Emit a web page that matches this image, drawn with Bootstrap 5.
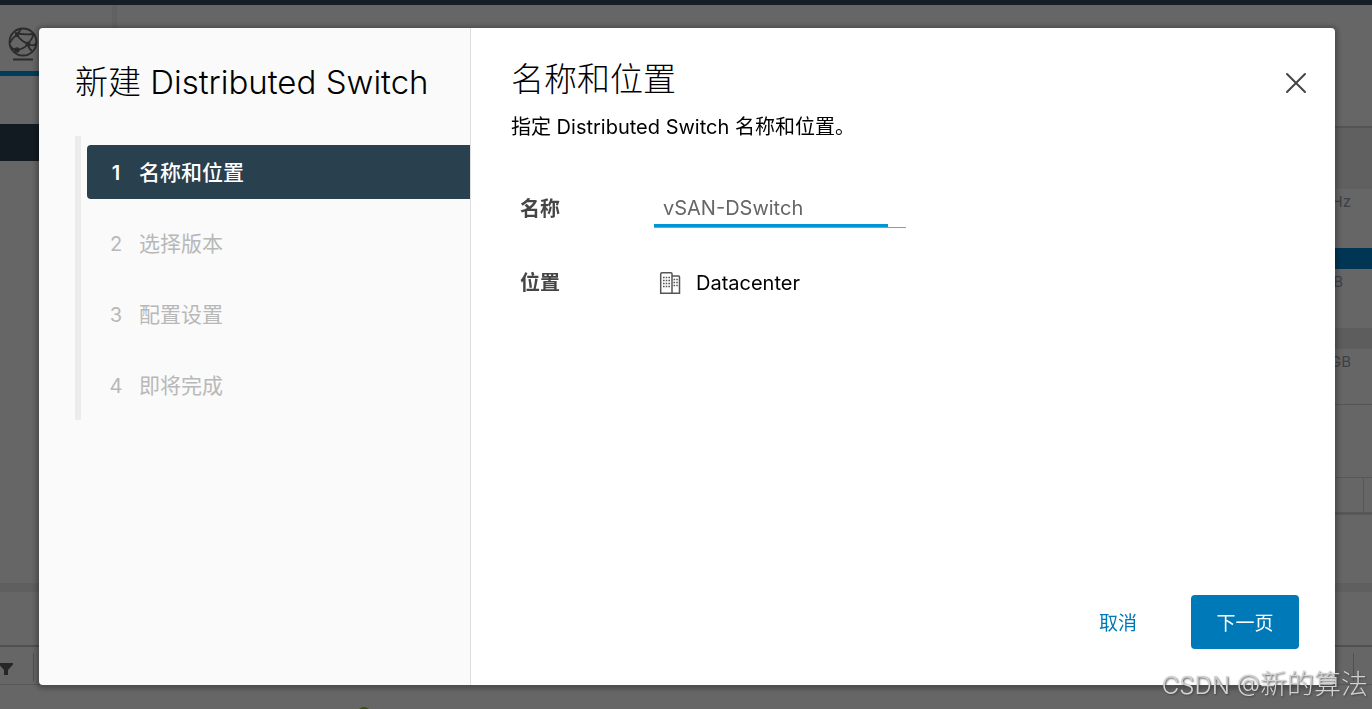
<!DOCTYPE html>
<html lang="zh-CN">
<head>
<meta charset="utf-8">
<meta name="viewport" content="width=device-width, initial-scale=1">
<title>新建 Distributed Switch</title>
<link href="https://cdn.jsdelivr.net/npm/bootstrap@5.3.0/dist/css/bootstrap.min.css" rel="stylesheet">
<style>
  body { font-family: Inter, "Noto Sans CJK SC", sans-serif; background: #666; color: #000; overflow: hidden; }
  h1, h2 { font-size: 33px; line-height: 40px; font-weight: 300; }

  /* dimmed application behind the wizard */
  .app-top { height: 5px; background: #161e26; }
  .app-side { width: 117px; }
  .side-tabs { height: 71px; border-bottom: 5px solid #003d5c; border-right: 5px solid #616161; padding: 22px 0 0 8px; }
  .side-gap { height: 48px; }
  .side-current { height: 37px; background: #131b22; }
  .app-main { width: 100px; font-size: 15px; line-height: 20px; color: #3c4146; text-align: right; }
  .main-head { height: 123px; border-bottom: 2px solid #545454; }
  .main-band { height: 61px; background: #606060; }
  .stat { height: 59px; padding: 3px 21px 0 0; }
  .stat-short { padding-right: 29px; }
  .stat-blue { height: 21px; background: #003554; }
  .stat-band { height: 21px; background: #5d5d5d; }
  .stat-last { height: 56px; border-bottom: 1px solid #545454; }
  .cell-gap { height: 73px; border-bottom: 1px solid #585858; }
  .cell-row { height: 37px; border-bottom: 3px solid #575757; padding-right: 8px; }
  .cell-row > div { height: 100%; border-right: 1px solid #575757; }
  .cell-end { height: 68px; }
  .splitter { height: 9px; background: #5f5f5f; }
  .tasks-head { height: 55px; border-bottom: 2px solid #505050; }
  .tasks-cols { height: 38px; padding: 2px 18px 0 0; border-bottom: 1px solid #575757; color: #262626; }
  .tasks-cols svg { margin: 4px 20px 0 0; }
  .tasks-cols .rule { width: 1px; height: 28px; background: #505050; }
  .status-dot { width: 14px; height: 14px; background: #3b4c14; left: 357px; top: 707px; }

  /* wizard */
  .wizard-wrap { padding: 28px 37px 24px 39px; }
  .wizard { border: 0; border-radius: 4px; box-shadow: 0 1px 4px 3px rgba(0,0,0,.25); overflow: hidden; }
  .wizard-nav { background: #fafafa; border-right: 1px solid #ddd; padding: 34px 0 0 36px; }
  .steps { margin-top: 34px; border-left: 6px solid #ececec; padding: 9px 0 8px 6px; gap: 17px; }
  .step { height: 54px; padding: 1px 0 0 22px; gap: 16px; font-size: 21px; color: #b8b8b8; background: none; border: 0; border-radius: 4px 0 0 4px; text-align: left; }
  .step b { width: 14px; font-size: 20px; font-weight: 400; text-align: center; }
  .step.active { background: #29404e; color: #fff; }
  .step.active span { font-weight: 500; }
  .step.active b { font-weight: 600; }
  .wizard-page { padding: 31px 36px 36px 40px; }
  .lead-line { font-size: 20px; line-height: 28px; margin-top: 14px; }
  .close-x { width: 24px; height: 24px; margin: 12px -9px 0 0; color: #444; }
  .form-rows { margin: 48px 0 0 9px; gap: 41px; font-size: 20px; line-height: 28px; }
  .form-rows label, .row-name { width: 134px; font-weight: 700; color: #454545; }
  .name-box { width: 252px; height: 39px; border: 0; border-bottom: 1px solid #999; border-radius: 0; padding: 0 9px; font-size: 20px; color: #666; outline: 0;
    background: linear-gradient(#0095d3, #0095d3) 0 100% / 234px 3px no-repeat; }
  .place { gap: 14px; padding-left: 4px; }
  .wizard-foot { gap: 30px; }
  .wizard-foot .btn { height: 54px; padding: 10px 0 6px; font-size: 19px; line-height: 28px; border-radius: 4px; --bs-btn-color: #0079b8; }
  .wizard-foot .go { --bs-btn-color: #fff; --bs-btn-bg: #0079b8; width: 108px; }
  .wizard-foot .no { width: 86px; }
  .watermark { right: 4px; bottom: 4px; font-size: 27px; line-height: 38px; color: #d2d2d2; text-shadow: 1px 1px 2px #444; font-weight: 300; z-index: 5; }
  .watermark span { font-size: 24px; }
</style>
</head>
<body class="min-vh-100 position-relative">
<div aria-hidden="true">
  <div class="app-top"></div>
  <div class="d-flex justify-content-between">
    <div class="app-side">
      <div class="side-tabs">
        <svg width="30" height="36" viewBox="0 0 30 36" fill="none" stroke="#2b2b2b" stroke-width="1.8"><circle cx="15" cy="15" r="13.5"/><path d="M7 6Q16 8 25 7M2 16Q4 11 9 8L13 2M9 8Q13 14 20 17T28 16M26 7Q24 12 20 17Q16 22 9 23M9 23Q3 22 2 18M20 17Q21 22 24 24M5 32.500H25"/><circle cx="20" cy="17" r="1.600" fill="#2b2b2b"/><circle cx="9" cy="23" r="1.800" fill="#2b2b2b"/><circle cx="9" cy="8" r="1" fill="#2b2b2b"/></svg>
      </div>
      <div class="side-gap"></div>
      <div class="side-current"></div>
    </div>
    <div class="app-main">
      <div class="main-head"></div>
      <div class="main-band"></div>
      <div class="stat">GHz</div>
      <div class="stat-blue"></div>
      <div class="stat stat-short">GB</div>
      <div class="stat-band"></div>
      <div class="stat stat-last">GB</div>
      <div class="cell-gap"></div>
      <div class="cell-row"><div></div></div>
      <div class="cell-end"></div>
    </div>
  </div>
  <div class="splitter"></div>
  <div class="tasks-head"></div>
  <div class="tasks-cols d-flex align-items-center">
    <svg width="13" height="14" viewBox="0 0 13 14" fill="currentColor"><path d="M0 1H13V2.500L8 8V13H4V8L0 3.500Z"/></svg>
    <div class="rule"></div>
    <div class="rule ms-auto"></div>
  </div>
</div>
<div class="status-dot rounded-circle position-absolute"></div>

<div class="wizard-wrap position-fixed top-0 start-0 w-100 h-100">
  <div class="modal-content wizard h-100" role="dialog" aria-labelledby="wizard-title">
    <div class="row g-0 flex-grow-1">
      <nav class="wizard-nav col-4">
        <h1 class="mb-0 text-nowrap" id="wizard-title">新建 Distributed Switch</h1>
        <div class="steps d-flex flex-column">
          <button class="step active d-flex align-items-center" type="button"><b>1</b><span>名称和位置</span></button>
          <button class="step d-flex align-items-center" type="button" disabled><b>2</b><span>选择版本</span></button>
          <button class="step d-flex align-items-center" type="button" disabled><b>3</b><span>配置设置</span></button>
          <button class="step d-flex align-items-center" type="button" disabled><b>4</b><span>即将完成</span></button>
        </div>
      </nav>
      <main class="wizard-page col-8 d-flex flex-column bg-white">
        <div class="d-flex justify-content-between">
          <h2 class="mb-0">名称和位置</h2>
          <button class="close-x btn p-0 border-0 d-flex" type="button" aria-label="关闭"><svg width="24" height="24" viewBox="0 0 24 24" fill="none" stroke="currentColor" stroke-width="2" stroke-linecap="round"><path d="M3 3L21 21M21 3L3 21"/></svg></button>
        </div>
        <p class="lead-line mb-0">指定 Distributed Switch 名称和位置。</p>
        <form class="form-rows d-flex flex-column">
          <div class="d-flex align-items-center">
            <label for="switch-name">名称</label>
            <input class="name-box" id="switch-name" type="text" value="vSAN-DSwitch">
          </div>
          <div class="d-flex align-items-center">
            <div class="row-name">位置</div>
            <div class="place d-flex align-items-center">
              <svg width="24" height="24" viewBox="0 0 24 24" fill="none" stroke="#555" stroke-width="1.500"><path d="M2.700 22.300V3Q2.700 1.700 4 1.700H13Q14 1.700 14 3V22.300ZM14 5H20.500Q21.500 5 21.500 6V22.300H14"/><path d="M5 6.500H12M5 9.500H12M5 12.500H12M5 15.500H12M15.500 8.500H20M15.500 11.500H20M15.500 14.500H20" stroke-dasharray="1.600 1.100"/></svg>
              <span>Datacenter</span>
            </div>
          </div>
        </form>
        <div class="wizard-foot d-flex justify-content-end mt-auto">
          <button class="btn no border-0" type="button">取消</button>
          <button class="btn go border-0" type="button">下一页</button>
        </div>
      </main>
    </div>
  </div>
</div>
<div class="watermark position-absolute text-nowrap"><span>CSDN @</span>新的算法</div>
<script src="https://cdn.jsdelivr.net/npm/bootstrap@5.3.0/dist/js/bootstrap.bundle.min.js"></script>
</body>
</html>
